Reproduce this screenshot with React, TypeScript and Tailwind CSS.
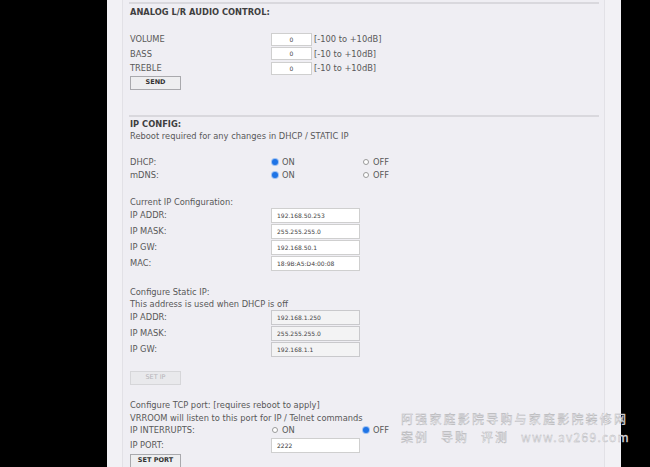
import React from 'react';

const font = { fontFamily: '"DejaVu Sans", Verdana, sans-serif' };

const Rule = () => <div className="h-[2px] bg-[#d9d8dd] mr-[5px] ml-[6px]" />;

const Radio = ({ checked, label }: { checked?: boolean; label: string }) => (
  <div className="flex items-center gap-[2px]">
    {checked ? (
      <span className="w-[6px] h-[6px] rounded-full bg-[#1f74e6] shadow-[0_0_0_1px_#9fc2f2]" />
    ) : (
      <span className="w-[6px] h-[6px] rounded-full border border-[#9a9a9a] bg-white" />
    )}
    <span className="ml-[2px]">{label}</span>
  </div>
);

const FieldRow = ({ label, value, disabled }: { label: string; value: string; disabled?: boolean }) => (
  <div className="flex items-center h-[16px]">
    <div className="w-[141px]">{label}</div>
    <div
      className={`w-[89px] h-[15px] border flex items-center pl-[5px] text-[6px] text-[#444] ${
        disabled ? 'bg-[#f3f3f4] border-[#c9c9cc]' : 'bg-white border-[#cfcfcf]'
      }`}
    >
      {value}
    </div>
  </div>
);

const AudioRow = ({ label, range }: { label: string; range: string }) => (
  <div className="flex items-center h-[14.5px]">
    <div className="w-[141px]">{label}</div>
    <div className="w-[41px] h-[13px] bg-white border border-[#cfcfcf] flex items-center justify-center text-[6px] text-[#444]">
      0
    </div>
    <div className="ml-[2px]">{range}</div>
  </div>
);

const RadioRow = ({ label, on }: { label: string; on: boolean }) => (
  <div className="flex items-center h-[13px]">
    <div className="w-[142px]">{label}</div>
    <div className="w-[91px]">
      <Radio checked={on} label="ON" />
    </div>
    <Radio checked={!on} label="OFF" />
  </div>
);

const Button = ({ children, disabled }: { children: React.ReactNode; disabled?: boolean }) => (
  <div
    className={`w-[51px] h-[14px] border flex items-center justify-center text-[6.5px] ${
      disabled
        ? 'bg-[#e9e9ec] border-[#d6d6d9] text-[#b4b4b8]'
        : 'bg-[#eeeef0] border-[#a9a9ad] text-[#333] font-bold'
    }`}
  >
    {children}
  </div>
);

const Line = ({ children, bold }: { children: React.ReactNode; bold?: boolean }) => (
  <div className={`h-[12px] leading-[12px] whitespace-nowrap ${bold ? 'font-bold text-[#3f3f3f]' : ''}`}>{children}</div>
);

export default function App() {
  return (
    <div className="w-[650px] h-[467px] bg-black overflow-hidden relative" style={font}>
      <div className="ml-[107px] w-[514px] h-full bg-[#f2f1f5] flex">
        <div className="ml-[15px] w-[483px] h-full bg-[#efeef3] border-l border-r border-[#e2e1e6] text-[8.3px] text-[#585858]">
          <div className="mt-[2px]">
            <Rule />
          </div>
          <div className="pl-[7px]">
            <div className="mt-[2px]">
              <Line bold>ANALOG L/R AUDIO CONTROL:</Line>
            </div>
            <div className="mt-[14px]">
              <AudioRow label="VOLUME" range="[-100 to +10dB]" />
              <AudioRow label="BASS" range="[-10 to +10dB]" />
              <AudioRow label="TREBLE" range="[-10 to +10dB]" />
            </div>
            <Button>SEND</Button>
          </div>

          <div className="mt-[25px]">
            <Rule />
          </div>
          <div className="pl-[7px]">
            <div className="mt-[1px]">
              <Line bold>IP CONFIG:</Line>
              <Line>Reboot required for any changes in DHCP / STATIC IP</Line>
            </div>
            <div className="mt-[14px]">
              <RadioRow label="DHCP:" on />
              <RadioRow label="mDNS:" on />
            </div>

            <div className="mt-[14px]">
              <Line>Current IP Configuration:</Line>
              <FieldRow label="IP ADDR:" value="192.168.50.253" />
              <FieldRow label="IP MASK:" value="255.255.255.0" />
              <FieldRow label="IP GW:" value="192.168.50.1" />
              <FieldRow label="MAC:" value="18:9B:A5:D4:00:08" />
            </div>

            <div className="mt-[14px]">
              <Line>Configure Static IP:</Line>
              <Line>This address is used when DHCP is off</Line>
              <FieldRow label="IP ADDR:" value="192.168.1.250" disabled />
              <FieldRow label="IP MASK:" value="255.255.255.0" disabled />
              <FieldRow label="IP GW:" value="192.168.1.1" disabled />
            </div>
            <div className="mt-[13px]">
              <Button disabled>SET IP</Button>
            </div>

            <div className="mt-[14px]">
              <Line>Configure TCP port: [requires reboot to apply]</Line>
              <div className="mt-[1px]">
                <Line>VRROOM will listen to this port for IP / Telnet commands</Line>
              </div>
              <RadioRow label="IP INTERRUPTS:" on={false} />
              <div className="h-[17px] flex items-center">
                <div className="w-[141px]">IP PORT:</div>
                <div className="w-[89px] h-[15px] bg-white border border-[#cfcfcf] flex items-center pl-[5px] text-[6px] text-[#333]">
                  2222
                </div>
              </div>
              <Button>SET PORT</Button>
            </div>
          </div>
        </div>
      </div>

      <div
        className="absolute left-[401px] top-[410px] text-[12px] leading-[17.5px] text-[#f6f6f8] [-webkit-text-stroke:0.4px_#b4b4b8] pointer-events-none"
        style={{ fontFamily: '"Noto Sans CJK SC", "DejaVu Sans", sans-serif' }}
      >
        <div className="tracking-[2.2px] whitespace-nowrap">阿强家庭影院导购与家庭影院装修网</div>
        <div className="flex whitespace-nowrap">
          <span className="tracking-[2px]">案例</span>
          <span className="ml-[12px] tracking-[2px]">导购</span>
          <span className="ml-[12px] tracking-[2px]">评测</span>
          <span className="ml-[12px] tracking-[1.3px]">www.av269.com</span>
        </div>
      </div>
    </div>
  );
}
